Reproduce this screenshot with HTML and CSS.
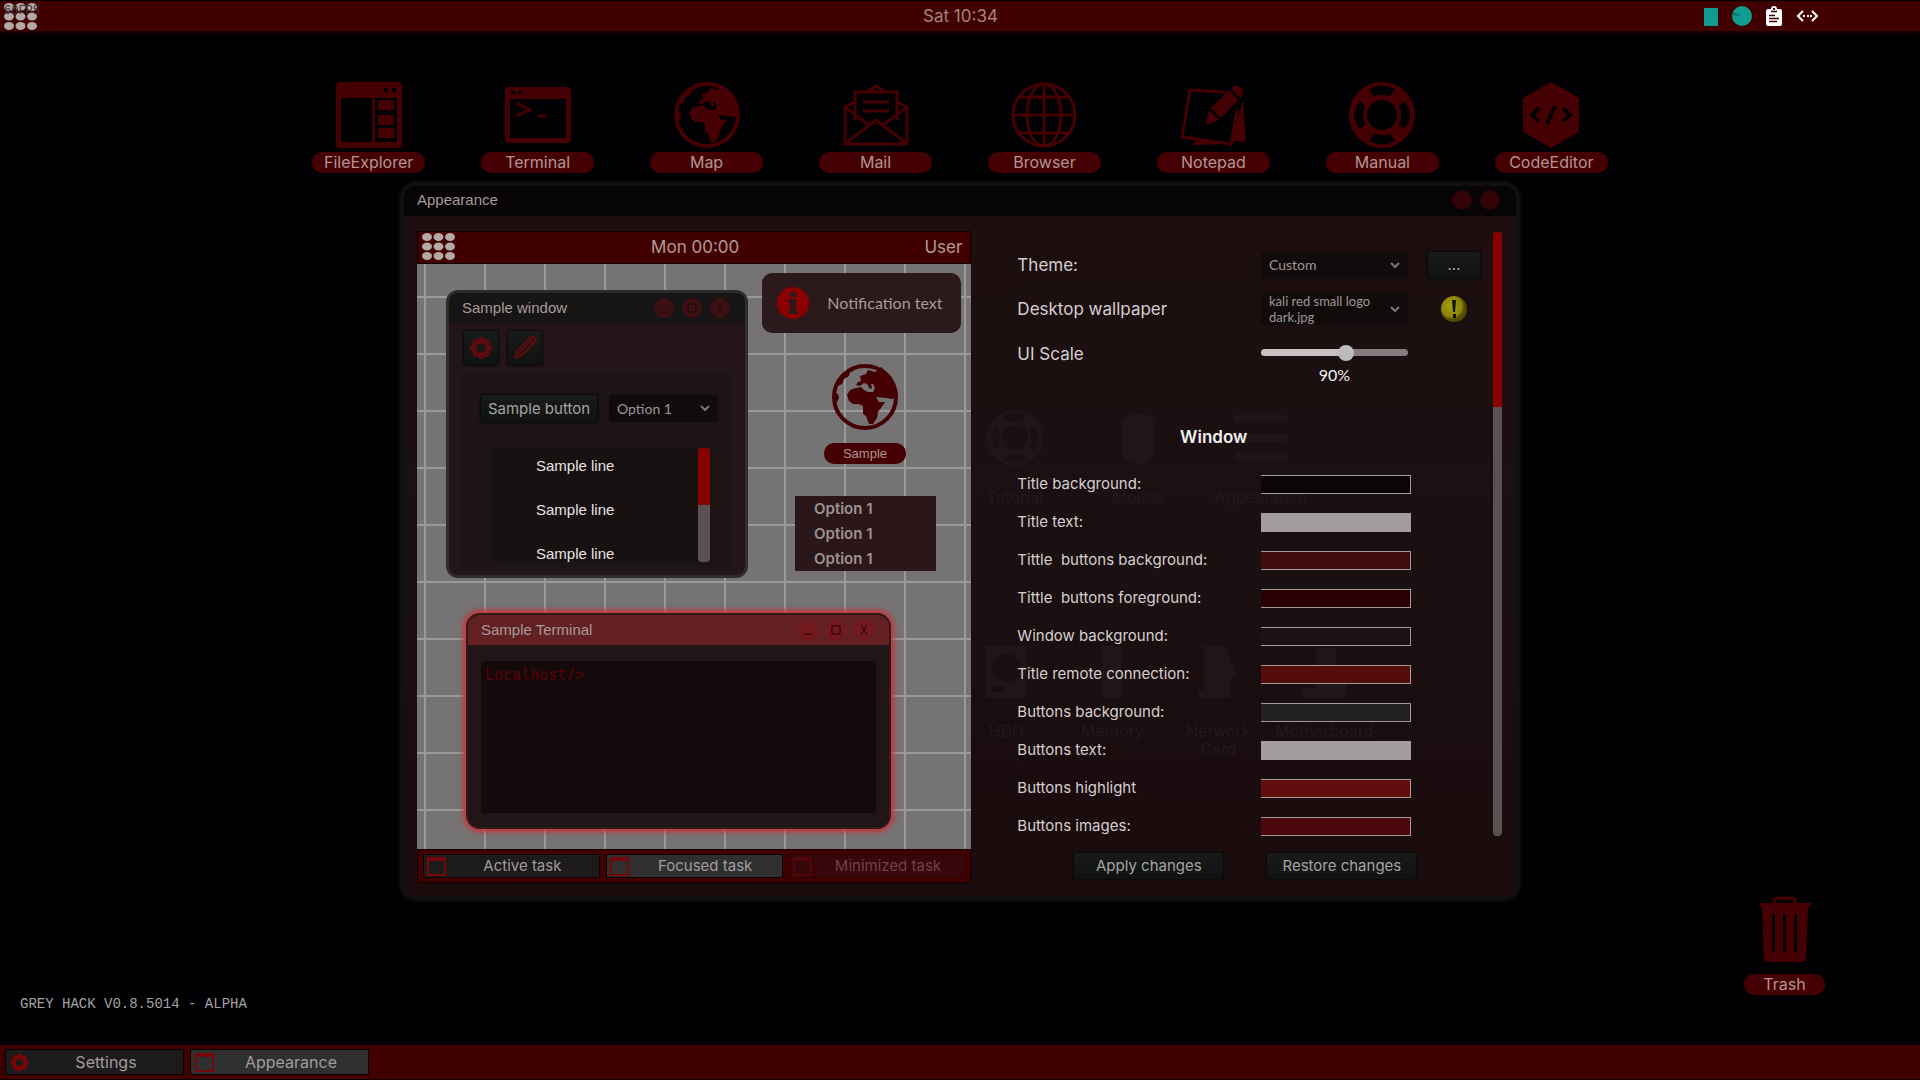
FILE: index.html
```html
<!DOCTYPE html>
<html lang="en">
<head>
    <meta charset="UTF-8">
    <meta name="viewport" content="width=device-width, initial-scale=1.0">
    <title>Desktop - Appearance</title>
    <link rel="stylesheet" href="styles.css">
</head>
<body>
    <!-- shared icons -->
    <svg class="sprite" aria-hidden="true">
        <symbol id="i-dots" viewBox="0 0 33 27">
            <g fill="currentColor">
                <ellipse cx="5" cy="4" rx="5" ry="4"/><ellipse cx="16.500" cy="4" rx="5" ry="4"/><ellipse cx="28" cy="4" rx="5" ry="4"/>
                <ellipse cx="5" cy="13.500" rx="5" ry="4"/><ellipse cx="16.500" cy="13.500" rx="5" ry="4"/><ellipse cx="28" cy="13.500" rx="5" ry="4"/>
                <ellipse cx="5" cy="23" rx="5" ry="4"/><ellipse cx="16.500" cy="23" rx="5" ry="4"/><ellipse cx="28" cy="23" rx="5" ry="4"/>
            </g>
        </symbol>
        <symbol id="i-files" viewBox="0 0 66 66">
            <path fill="currentColor" fill-rule="evenodd" d="M4 0H62a4 4 0 0 1 4 4V62a4 4 0 0 1-4 4H4a4 4 0 0 1-4-4V4a4 4 0 0 1 4-4zM5 16V60H36V16zM39 16V60H61V16zM48 6v4h4v-4zM56 6v4h4v-4z"/>
            <path fill="currentColor" d="M42 18h16v10H42zM42 33h16v10H42zM42 46h16v10H42z"/>
        </symbol>
        <symbol id="i-terminal" viewBox="0 0 66 66">
            <path fill="currentColor" fill-rule="evenodd" d="M4 5H62a4 4 0 0 1 4 4V57a4 4 0 0 1-4 4H4a4 4 0 0 1-4-4V9a4 4 0 0 1 4-4zM5 17V56H61V17zM6 9v3h4v-3zM13 9v3h4v-3z"/>
            <path fill="none" stroke="currentColor" stroke-width="3" d="M11 21l14 7-14 6M33 34h8"/>
        </symbol>
        <symbol id="i-globe" viewBox="0 0 66 66">
            <circle cx="33" cy="33" r="31" fill="none" stroke="currentColor" stroke-width="4"/>
            <path fill="currentColor" d="M28 12L34 10 36 6 43 8 49 3 59 12 65 25 65 34 59 35 55 34 44 33 47 38 53 38 49 44 46 48 45 54 41 60 37 60 34 52 31 50 31 42 27 40 21 40 17 37 15 31 18 26 24 24 29 23 32 26 36 28 41 28 43 24 41 20 39 20 40 24 38 25 35 20 32 19 28 22 24 21 26 18 29 17z"/>
            <path fill="currentColor" d="M5 18L11 9 21 4 22 7 18 8 17 12 12 15 10 20 6 22zM1 28L6 30 7 34 3 42 1 38z"/>
        </symbol>
        <symbol id="i-mail" viewBox="0 0 66 66">
            <path fill="none" stroke="currentColor" stroke-width="3" d="M12 38V10H54V38M12 20L2 25V62H64V25L54 20M2 25L26 43M64 25L40 43M2 62L33 38 64 62M25 9L33 4 41 9M20 20H46M20 29H46"/>
        </symbol>
        <symbol id="i-browser" viewBox="0 0 66 66">
            <g fill="none" stroke="currentColor" stroke-width="3">
                <circle cx="33" cy="33" r="31"/>
                <path d="M33 2V64M2 33H64M8 15H58M8 51H58"/>
                <ellipse cx="33" cy="33" rx="17" ry="31"/>
            </g>
        </symbol>
        <symbol id="i-notepad" viewBox="0 0 66 66">
            <path fill="none" stroke="currentColor" stroke-width="3" d="M44 10L10 8 2 55 51 62 57 28"/>
            <path fill="currentColor" d="M63 18L66 60 54 59 51 65 48 62 14 63 14 59 50 62zM54 4a7 7 0 0 1 8 10L60 16 51 6zM49 8L58 18 41 36 31 26zM29 28L39 38 27 43 26 41z"/>
        </symbol>
        <symbol id="i-ring" viewBox="0 0 66 66">
            <path fill="currentColor" fill-rule="evenodd" d="M33 0a33 33 0 1 1 0 66a33 33 0 1 1 0-66zM33 18a15 15 0 1 0 0 30a15 15 0 1 0 0-30zM20 7L25 14Q33 12 41 14L46 7Q33 0 20 7zM20 59L25 52Q33 54 41 52L46 59Q33 66 20 59zM11 19L16 24Q12 33 16 42L11 47Q-1 33 11 19zM55 19L50 24Q54 33 50 42L55 47Q67 33 55 19z"/>
        </symbol>
        <symbol id="i-code" viewBox="0 0 66 66">
            <path fill="currentColor" d="M33 0L61 16V50L33 66 5 50V16z"/>
            <path fill="none" stroke="#050002" stroke-width="4" d="M21 26l-7 7 7 6M45 26l7 7-7 6M37 24l-8 18"/>
        </symbol>
        <symbol id="i-trash" viewBox="0 0 66 66">
            <path fill="none" stroke="currentColor" stroke-width="3" d="M22 7V5Q22 2 26 2H39Q43 2 43 5V7"/>
            <path fill="currentColor" fill-rule="evenodd" d="M6 7H60L56 12 54 62Q54 66 50 66H16Q12 66 12 62L10 12zM20 18V56H23V18zM31 18V56H34V18zM42 18V56H45V18z"/>
        </symbol>
        <symbol id="i-task" viewBox="0 0 20 20">
            <path fill="none" stroke="currentColor" stroke-width="2" d="M1 1H19V19H1z"/>
            <path fill="currentColor" d="M0 0H20V4H0z"/>
        </symbol>
        <symbol id="i-gear" viewBox="0 0 24 24">
            <circle cx="12" cy="12" r="7" fill="none" stroke="currentColor" stroke-width="5"/>
            <path stroke="currentColor" stroke-width="5" d="M12 1v4M12 19v4M1 12h4M19 12h4M4.200 4.200l3 3M16.800 16.800l3 3M4.200 19.800l3-3M16.800 7.200l3-3"/>
        </symbol>
    </svg>

    <header class="topbar">
        <button class="menu-btn" aria-label="Applications"><svg class="dots"><use href="#i-dots"/></svg></button>
        <span class="fps">60FPS</span>
        <time class="clock">Sat 10:34</time>
        <div class="tray">
            <svg width="14" height="19" viewBox="0 0 14 19"><rect width="14" height="18" y="1" rx="1" fill="#109c90"/></svg>
            <svg width="20" height="20" viewBox="0 0 20 20"><circle cx="10" cy="10" r="10" fill="#109c90"/><path d="M10 10L0 9 1 6z" fill="#0b6f67"/></svg>
            <svg width="16" height="20" viewBox="0 0 16 20"><path fill="#fff" fill-rule="evenodd" d="M2 3H5a3 3 0 0 1 6 0H14a2 2 0 0 1 2 2V18a2 2 0 0 1-2 2H2a2 2 0 0 1-2-2V5a2 2 0 0 1 2-2zM7 2v2h2V2z"/><path stroke="#400000" stroke-width="1.500" d="M5 5.500h6M3 9.500h6M3 12.500h10M3 15.500h8"/></svg>
            <svg width="23" height="12" viewBox="0 0 23 12"><path fill="none" stroke="#fff" stroke-width="2" d="M7 1L2 6l5 5M16 1l5 5-5 5"/><path fill="#fff" d="M7 5h2v2H7zM11 5h2v2h-2zM14 5h2v2h-2z"/></svg>
        </div>
    </header>

    <main class="desktop">
        <nav class="shortcuts">
            <a class="shortcut" href="#"><svg><use href="#i-files"/></svg><span>FileExplorer</span></a>
            <a class="shortcut" href="#"><svg><use href="#i-terminal"/></svg><span>Terminal</span></a>
            <a class="shortcut" href="#"><svg><use href="#i-globe"/></svg><span>Map</span></a>
            <a class="shortcut" href="#"><svg><use href="#i-mail"/></svg><span>Mail</span></a>
            <a class="shortcut" href="#"><svg><use href="#i-browser"/></svg><span>Browser</span></a>
            <a class="shortcut" href="#"><svg><use href="#i-notepad"/></svg><span>Notepad</span></a>
            <a class="shortcut" href="#"><svg><use href="#i-ring"/></svg><span>Manual</span></a>
            <a class="shortcut" href="#"><svg><use href="#i-code"/></svg><span>CodeEditor</span></a>
        </nav>

        <section class="window">
            <div class="titlebar">
                <h1>Appearance</h1>
                <button class="dot" aria-label="Minimize"></button>
                <button class="dot" aria-label="Close"></button>
            </div>

            <div class="window-body">
                <div class="preview">
                    <div class="p-topbar">
                        <svg class="dots"><use href="#i-dots"/></svg>
                        <span class="p-clock">Mon 00:00</span>
                        <span class="p-user">User</span>
                    </div>

                    <div class="wallpaper">
                        <div class="s-window">
                            <div class="s-title">
                                <h2>Sample window</h2>
                                <button class="dot" aria-label="Minimize"><svg viewBox="0 0 20 20"><path d="M6 14h8"/></svg></button>
                                <button class="dot" aria-label="Maximize"><svg viewBox="0 0 20 20"><path d="M6 6h8v8H6z"/></svg></button>
                                <button class="dot" aria-label="Close"><svg viewBox="0 0 20 20"><path d="M7 5l6 10M13 5L7 15"/></svg></button>
                            </div>
                            <div class="s-tools">
                                <button class="btn tool" aria-label="Settings"><svg><use href="#i-gear"/></svg></button>
                                <button class="btn tool" aria-label="Edit"><svg viewBox="0 0 24 24"><path fill="none" stroke="currentColor" stroke-width="2" d="M2 22L4 15 18 1Q21 0 23 3L22 6 8 20zM4 15l4 5M7 16L19 4M16 3l4 5"/></svg></button>
                            </div>
                            <div class="s-panel">
                                <div class="s-controls">
                                    <button class="btn">Sample button</button>
                                    <select aria-label="Sample option"><option>Option 1</option></select>
                                </div>
                                <div class="s-list">
                                    <ul>
                                        <li>Sample line</li>
                                        <li>Sample line</li>
                                        <li>Sample line</li>
                                    </ul>
                                    <div class="scroll"><div class="thumb half"></div></div>
                                </div>
                            </div>
                        </div>

                        <div class="notice">
                            <svg viewBox="0 0 32 32"><circle cx="16" cy="16" r="16" fill="#8c0000"/><path fill="#2c171a" d="M13 5h6v5h-6zM11 12h8v12h2v3H11v-3h2v-9h-2z"/></svg>
                            <span>Notification text</span>
                        </div>

                        <a class="shortcut s-icon" href="#"><svg><use href="#i-globe"/></svg><span>Sample</span></a>

                        <ul class="s-menu">
                            <li>Option 1</li>
                            <li>Option 1</li>
                            <li>Option 1</li>
                        </ul>

                        <div class="s-terminal">
                            <div class="s-title remote">
                                <h2>Sample Terminal</h2>
                                <button class="dot" aria-label="Minimize"><svg viewBox="0 0 20 20"><path d="M6 14h8"/></svg></button>
                                <button class="dot" aria-label="Maximize"><svg viewBox="0 0 20 20"><path d="M6 6h8v8H6z"/></svg></button>
                                <button class="dot" aria-label="Close"><svg viewBox="0 0 20 20"><path d="M7 5l6 10M13 5L7 15"/></svg></button>
                            </div>
                            <div class="s-screen">Localhost/&gt;</div>
                        </div>
                    </div>

                    <div class="p-taskbar">
                        <button class="task"><svg><use href="#i-task"/></svg><span>Active task</span></button>
                        <button class="task focused"><svg><use href="#i-task"/></svg><span>Focused task</span></button>
                        <button class="task minimized"><svg><use href="#i-task"/></svg><span>Minimized task</span></button>
                    </div>
                </div>

                <div class="pane">
                    <!-- settings window showing through -->
                    <div class="ghost" aria-hidden="true">
                        <div class="ghost-row first">
                            <div><svg><use href="#i-ring"/></svg>Tutorial</div>
                            <div><svg viewBox="0 0 56 56"><path fill="currentColor" d="M12 14Q12 4 28 4T44 14V38Q44 54 28 54T12 38z"/></svg>Mouse</div>
                            <div><svg viewBox="0 0 56 56"><path stroke="currentColor" stroke-width="8" stroke-linecap="round" d="M5 9H51M5 28H51M5 47H51"/></svg>Appearance</div>
                        </div>
                        <div class="ghost-row">
                            <div><svg viewBox="0 0 56 56"><path fill="currentColor" fill-rule="evenodd" d="M8 2H48V54H8zM28 10a14 14 0 1 0 1 0zM14 42v6h12v-6z"/></svg>HDD</div>
                            <div><svg viewBox="0 0 56 56"><path fill="currentColor" d="M18 2H38V54H18z"/></svg>Memory</div>
                            <div><svg viewBox="0 0 56 56"><path fill="currentColor" d="M14 2H36L46 30 40 34V54H8V46H14z"/></svg>Network<br>Card</div>
                            <div><svg viewBox="0 0 56 56"><path fill="currentColor" d="M20 4H40V26H50V54H6V44H20z"/></svg>Motherboard</div>
                        </div>
                    </div>

                    <div class="options">
                        <form class="fields" id="theme-form">
                            <div class="row top">
                                <label for="theme">Theme:</label>
                                <select id="theme"><option>Custom</option></select>
                                <button class="btn more" type="button">...</button>
                            </div>
                            <div class="row top">
                                <label for="wallpaper">Desktop wallpaper</label>
                                <select id="wallpaper" class="two-lines"><option>kali red small logo dark.jpg</option></select>
                                <svg class="warn" viewBox="0 0 26 26"><defs><radialGradient id="warn-fill" cx="0.400" cy="0.400"><stop offset="0" stop-color="#a8a010"/><stop offset="0.800" stop-color="#8a8409"/><stop offset="1" stop-color="#514d05"/></radialGradient></defs><circle cx="13" cy="13" r="13" fill="url(#warn-fill)"/><path fill="#15140a" d="M11 4h4l-1 12h-2zM12 18h3v4h-3z"/></svg>
                            </div>
                            <div class="row scale">
                                <label for="scale">UI Scale</label>
                                <div class="slider">
                                    <input type="range" id="scale" min="50" max="118" value="90">
                                    <output for="scale">90%</output>
                                </div>
                            </div>

                            <h2>Window</h2>

                            <div class="row"><label for="c1">Title background:</label><input type="color" id="c1" value="#0b0606"></div>
                            <div class="row"><label for="c2">Title text:</label><input type="color" id="c2" value="#a39d9d"></div>
                            <div class="row"><label for="c3">Tittle  buttons background:</label><input type="color" id="c3" value="#3f0c0f"></div>
                            <div class="row"><label for="c4">Tittle  buttons foreground:</label><input type="color" id="c4" value="#280002"></div>
                            <div class="row"><label for="c5">Window background:</label><input type="color" id="c5" value="#1a1214"></div>
                            <div class="row"><label for="c6">Title remote connection:</label><input type="color" id="c6" value="#540c0d"></div>
                            <div class="row"><label for="c7">Buttons background:</label><input type="color" id="c7" value="#222022"></div>
                            <div class="row"><label for="c8">Buttons text:</label><input type="color" id="c8" value="#a39d9d"></div>
                            <div class="row"><label for="c9">Buttons highlight</label><input type="color" id="c9" value="#610d0d"></div>
                            <div class="row"><label for="c10">Buttons images:</label><input type="color" id="c10" value="#4c080c"></div>
                        </form>
                        <div class="scroll"><div class="thumb"></div></div>
                    </div>

                    <div class="actions">
                        <button class="btn" type="submit" form="theme-form">Apply changes</button>
                        <button class="btn" type="reset" form="theme-form">Restore changes</button>
                    </div>
                </div>
            </div>
        </section>

        <a class="shortcut trash" href="#"><svg><use href="#i-trash"/></svg><span>Trash</span></a>
        <p class="version">GREY HACK V0.8.5014 - ALPHA</p>
    </main>

    <footer class="taskbar">
        <button class="task"><svg><use href="#i-gear"/></svg><span>Settings</span></button>
        <button class="task focused"><svg><use href="#i-task"/></svg><span>Appearance</span></button>
    </footer>
</body>
</html>
```
FILE: styles.css
```css
* {
    box-sizing: border-box;
}

body {
    margin: 0;
    min-height: 100vh;
    display: flex;
    flex-direction: column;
    background-color: #010002;
    color: #a89a9a;
    font-family: Inter, "Open Sans", sans-serif;
    font-size: 16px;
    line-height: 20px;
}

h1, h2, p, ul {
    margin: 0;
    padding: 0;
}

ul {
    list-style: none;
}

a {
    color: inherit;
    text-decoration: none;
}

button, select, input {
    font: inherit;
    color: inherit;
    margin: 0;
}

button {
    padding: 0;
    border: none;
    background: none;
    cursor: pointer;
}

svg {
    display: block;
    flex: none;
}

.sprite {
    position: absolute;
    width: 0;
    height: 0;
}

.dots {
    width: 33px;
    height: 27px;
    color: #b5a9a7;
}

/* top bar */

.topbar {
    display: grid;
    grid-template-columns: 1fr auto 1fr;
    align-items: center;
    position: relative;
    height: 31px;
    padding: 0 101px 0 4px;
    border-top: 1px solid #000;
    background-color: #400000;
    box-shadow: 0 1px 4px #2a0000;
}

.menu-btn {
    justify-self: start;
}

.fps {
    position: absolute;
    left: 4px;
    top: 0;
    font-family: "Liberation Mono", monospace;
    font-size: 12px;
    color: #3d3535;
}

.clock {
    padding-left: 98px;
    color: #a58380;
    font-size: 17px;
}

.tray {
    display: flex;
    justify-content: flex-end;
    align-items: center;
    gap: 14px;
}

/* desktop */

.desktop {
    flex: 1;
    position: relative;
    padding-top: 51px;
}

.shortcuts {
    display: grid;
    grid-template-columns: repeat(8, 1fr);
    justify-items: center;
    padding: 0 14.8%;
}

.shortcut {
    display: flex;
    flex-direction: column;
    align-items: center;
    gap: 4px;
    color: #450003;
}

.shortcut svg {
    width: 66px;
    height: 66px;
}

.shortcut span {
    min-width: 113px;
    border-radius: 10px;
    background-color: #450003;
    color: #b39492;
    line-height: 21px;
    text-align: center;
}

.trash {
    position: absolute;
    right: 95px;
    bottom: 50px;
    gap: 12px;
}

.trash span {
    min-width: 81px;
}

.version {
    position: absolute;
    left: 20px;
    bottom: 31px;
    font-family: "Liberation Mono", monospace;
    font-size: 14px;
    color: #a3a3a3;
}

/* window */

.window {
    width: 58%;
    min-width: 1120px;
    margin: 9px auto 0;
    border: 4px solid #101012;
    border-radius: 16px;
    background: linear-gradient(#1d0e0f, #1a1012 50%, #1b0b0d);
    box-shadow: 0 0 5px #161616;
}

.titlebar {
    display: flex;
    align-items: center;
    gap: 8px;
    height: 30px;
    padding: 0 16px 2px 13px;
    border-radius: 12px 12px 0 0;
    background-color: #060405;
}

.titlebar h1, .s-title h2 {
    flex: 1;
    font-family: "Liberation Sans", Arial, sans-serif;
    font-size: 15px;
    font-weight: normal;
}

.dot {
    width: 20px;
    height: 20px;
    border-radius: 50%;
    background-color: #310306;
}

.dot svg {
    fill: none;
    stroke: #1c0506;
}

.window-body {
    display: grid;
    grid-template-columns: 51fr 49fr;
    padding: 15px 12px 13px 13px;
}

/* buttons, drop-downs and scrollbars */

.btn {
    height: 27px;
    border-radius: 2px;
    background: linear-gradient(#191b1a, #0f1211);
    box-shadow: 0 0 2px 1px #0b0808;
    color: #a7a3a3;
    font-size: 15px;
    line-height: 20px;
}

select {
    appearance: base-select;
    display: flex;
    align-items: center;
    min-height: 0;
    height: 27px;
    padding: 0 30px 0 8px;
    border: none;
    border-radius: 3px;
    background: #120b0c url("data:image/svg+xml,%3Csvg xmlns='http://www.w3.org/2000/svg' width='10' height='7'%3E%3Cpath d='M1 1l4 4 4-4' fill='none' stroke='%23777' stroke-width='2'/%3E%3C/svg%3E") no-repeat right 8px center;
    color: #9d9797;
    font-family: Lato, sans-serif;
    font-size: 14px;
    line-height: 16px;
    white-space: normal;
    text-align: left;
}

select::picker-icon {
    display: none;
}

select.two-lines {
    height: 32px;
    font-size: 13px;
}

.scroll {
    background-color: #5b5152;
    border-radius: 4px;
}

.thumb {
    height: 29%;
    border-radius: 4px 4px 0 0;
    background-color: #880000;
}

.thumb.half {
    height: 50%;
}

/* theme preview */

.preview {
    display: flex;
    flex-direction: column;
}

.p-topbar {
    display: grid;
    grid-template-columns: 1fr auto 1fr;
    align-items: center;
    height: 33px;
    padding: 0 8px 2px 4px;
    border: 1px solid #100000;
    background-color: #400000;
    color: #b39a99;
    font-size: 17px;
}

.p-clock {
    padding-left: 6px;
}

.p-user {
    justify-self: end;
}

.wallpaper {
    flex: 1;
    position: relative;
    overflow: hidden;
    background-color: #757373;
    background-image:
        linear-gradient(90deg, #9a9999 2px, transparent 2px),
        linear-gradient(#9a9999 2px, transparent 2px);
    background-size: 60px 57px;
    background-position: 7px 32px;
}

.s-window {
    position: absolute;
    left: 29px;
    top: 26px;
    width: 302px;
    padding-bottom: 7px;
    border: 3px solid #2f2c2e;
    border-radius: 12px;
    background-color: #241518;
}

.s-title {
    display: flex;
    align-items: center;
    gap: 8px;
    height: 30px;
    padding: 0 15px 0 13px;
    border-radius: 9px 9px 0 0;
    background-color: #161414;
}

.s-title .dot {
    background-color: #3b1013;
}

.s-tools {
    display: flex;
    gap: 10px;
    padding: 8px 15px;
}

.tool {
    display: grid;
    place-items: center;
    width: 34px;
    height: 34px;
    color: #5d0c0e;
}

.tool svg {
    width: 24px;
    height: 24px;
}

.s-panel {
    margin: 0 13px;
    padding: 22px 14px 6px 19px;
    background-color: #1c1415;
}

.s-controls {
    display: flex;
    gap: 12px;
}

.s-controls .btn {
    width: 116px;
}

.s-controls select {
    flex: 1;
}

.s-list {
    display: flex;
    height: 114px;
    margin: 26px 8px 0 10px;
    background-color: #171112;
    overflow: hidden;
}

.s-list ul {
    flex: 1;
    padding-left: 45px;
    color: #e6e2e2;
    font-family: "Liberation Sans", Arial, sans-serif;
    font-size: 15px;
}

.s-list li {
    line-height: 36px;
    margin-bottom: 8px;
}

.s-list .scroll {
    width: 12px;
}

.notice {
    position: absolute;
    top: 9px;
    right: 10px;
    display: flex;
    align-items: center;
    gap: 18px;
    width: 199px;
    height: 60px;
    padding-left: 15px;
    border-radius: 10px;
    background-color: #2c191c;
    color: #a89a9a;
    font-family: Lato, sans-serif;
    font-size: 16px;
}

.notice svg {
    width: 32px;
    height: 32px;
}

.s-icon {
    position: absolute;
    left: 407px;
    top: 100px;
    gap: 13px;
}

.s-icon span {
    min-width: 82px;
    font-family: "Liberation Sans", Arial, sans-serif;
    font-size: 13px;
}

.s-menu {
    position: absolute;
    left: 378px;
    top: 232px;
    width: 141px;
    padding-left: 19px;
    background-color: #2b171a;
    font-size: 15px;
    font-weight: 600;
    line-height: 25px;
    color: #9d9192;
}

.s-terminal {
    position: absolute;
    left: 49px;
    top: 349px;
    width: 425px;
    padding-bottom: 14px;
    border: 2px solid #301a1c;
    border-radius: 14px;
    background-color: #211517;
    box-shadow: 0 0 5px 3px #c8353b;
}

.s-title.remote {
    background-color: #622022;
    border-radius: 12px 12px 0 0;
    height: 30px;
}

.s-title.remote .dot {
    background-color: #73191d;
}

.s-screen {
    height: 152px;
    margin: 16px 13px 0;
    padding: 4px;
    border-radius: 3px;
    background-color: #140a0b;
    color: #5e0005;
    font-family: "DejaVu Sans Mono", monospace;
    font-size: 15px;
}

/* task bars */

.p-taskbar, .taskbar {
    display: flex;
    gap: 6px;
    padding: 4px 5px;
    border: 1px solid #100000;
    background-color: #400000;
}

.taskbar {
    height: 35px;
    border-width: 0 0 1px;
}

.task {
    display: flex;
    align-items: center;
    flex: 1;
    padding: 0 0 0 3px;
    border: 1px solid #0a0000;
    background-color: #1c1a1b;
    color: #a29c9c;
    font-size: 15px;
    line-height: 22px;
}

.taskbar .task {
    flex: none;
    width: 179px;
    padding: 0 0 0 4px;
    font-size: 16px;
}

.task svg {
    width: 19px;
    height: 19px;
    color: #7a0507;
}

.task span {
    flex: 1;
    text-align: center;
}

.task.focused {
    background-color: #2f2f2f;
}

.task.minimized {
    border-color: #300002;
    background-color: #35060a;
    color: #704446;
}

.task.minimized svg {
    color: #550508;
}

/* settings pane */

.pane {
    position: relative;
    padding-bottom: 4px;
}

.options {
    display: flex;
    position: relative;
    justify-content: space-between;
    padding-left: 46px;
}

.fields {
    flex: 1;
    padding-top: 12px;
    color: #d6cfcf;
}

.options .scroll {
    width: 9px;
    margin: 1px 2px 9px 13px;
}

.row {
    display: grid;
    grid-template-columns: 1fr 150px 52px;
    column-gap: 17px;
    align-items: center;
    height: 38px;
    font-size: 15px;
}

.row label {
    margin-right: -17px;
    white-space: pre;
}

.row select {
    width: 147px;
}

.row.top, .row.scale {
    height: 44px;
    font-size: 17px;
}

.row.scale {
    align-items: start;
    height: 64px;
}

.row.scale label {
    line-height: 46px;
}

.row .warn {
    justify-self: center;
    width: 26px;
    height: 26px;
}

.slider {
    width: 147px;
    padding-top: 13px;
    text-align: center;
}

.slider output {
    display: block;
    margin-top: 5px;
    color: #f2f0f0;
    font-family: Lato, sans-serif;
    font-size: 16px;
}

input[type="range"] {
    appearance: none;
    display: block;
    width: 100%;
    height: 16px;
    background: none;
}

input[type="range"]::-webkit-slider-runnable-track {
    height: 7px;
    border-radius: 4px;
    background: linear-gradient(90deg, #c8c0c1 58%, #857d7e 58%);
}

input[type="range"]::-webkit-slider-thumb {
    appearance: none;
    width: 16px;
    height: 16px;
    margin-top: -4px;
    border-radius: 50%;
    background-color: #bdbbbb;
}

input[type="color"] {
    appearance: none;
    width: 150px;
    height: 19px;
    padding: 0;
    border: 1px solid #a39b99;
    border-left: none;
    background: none;
}

input[type="color"]::-webkit-color-swatch-wrapper {
    padding: 0;
}

input[type="color"]::-webkit-color-swatch {
    border: none;
    border-radius: 0;
}

.fields h2 {
    margin: 30px 70px 16px 0;
    color: #f2f0f0;
    font-size: 17px;
    font-weight: 600;
    line-height: 24px;
    text-align: center;
}

.actions {
    display: flex;
    position: relative;
    gap: 44px;
    margin-top: 8px;
    padding-left: 103px;
}

.actions .btn {
    width: 149px;
    height: 26px;
}

/* faint icons behind the fields */

.ghost {
    position: absolute;
    left: 0;
    top: 179px;
    color: #23191b;
}

.ghost svg {
    opacity: 0.7;
}

.ghost-row {
    display: grid;
    grid-template-columns: repeat(4, 106px);
    margin-left: -18px;
}

.ghost-row.first {
    grid-template-columns: repeat(3, 123px);
    height: 234px;
}

.ghost-row div {
    text-align: center;
    line-height: 18px;
}

.ghost-row svg {
    width: 56px;
    height: 56px;
    margin: 0 auto 22px;
}
```
